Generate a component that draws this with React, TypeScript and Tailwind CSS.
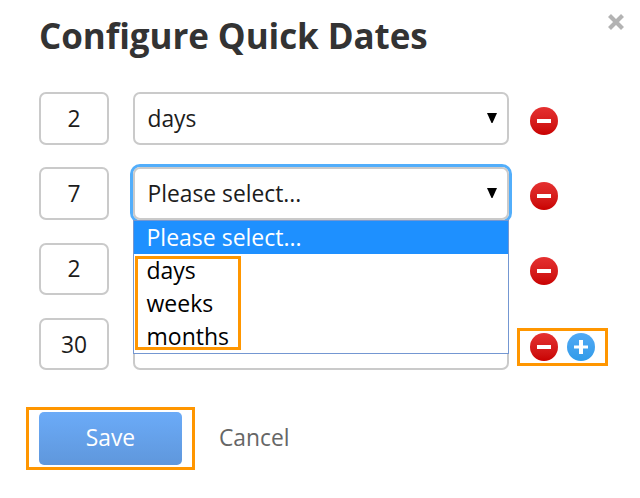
import React from "react";

const font = { label: "font-['Open_Sans','Noto_Sans',sans-serif]" };

function RemoveIcon() {
  return (
    <button aria-label="Remove" className="flex h-7 w-7 shrink-0 items-center justify-center rounded-full bg-linear-to-b from-[#e53030] to-[#c90000]">
      <span className="h-1 w-3.5 bg-white" />
    </button>
  );
}

function AddIcon() {
  return (
    <button aria-label="Add" className="ml-[9px] flex h-7 w-7 shrink-0 items-center justify-center rounded-full bg-linear-to-b from-[#52aaf5] to-[#2f9be9]">
      <svg width="14" height="14" viewBox="0 0 14 14" fill="#fff">
        <path d="M5 0h4v5.500h5v3H9V14H5V8.500H0v-3h5z" />
      </svg>
    </button>
  );
}

function Caret() {
  return (
    <svg width="10" height="10" viewBox="0 0 10 10" className="-mt-0.5 shrink-0">
      <path d="M0 0h10L5.500 10h-1z" />
    </svg>
  );
}

function Menu() {
  return (
    <div className="absolute -left-0.5 top-[51px] z-10 h-[134px] w-[376px] border border-[#7497d2] bg-white text-[23px] leading-[33px] text-black">
      <div className="h-[33px] bg-[#1e90ff] pl-[12.5px] text-white">Please select...</div>
      <div className="h-[33px] pl-[12.5px]">days</div>
      <div className="h-[33px] pl-[12.5px]">weeks</div>
      <div className="h-[33px] pl-[12.5px]">months</div>
      <div className="absolute left-px top-[35px] h-[94px] w-[106px] border-3 border-[#ff9600]" />
    </div>
  );
}

type RowProps = { count: string; value?: string; open?: boolean; last?: boolean; height: string; iconOffset?: string };

function Row({ count, value, open, last, height, iconOffset = "mt-[15px]" }: RowProps) {
  return (
    <div className={`flex ${height}`}>
      <div className={`flex w-[70px] items-center justify-center rounded-[7px] border-2 border-[#cacaca] text-[22.8px] text-[#1c1c1c] ${last ? "pt-[3px]" : "pt-px"}`}>
        {count}
      </div>
      <div
        className={`relative ml-6 flex w-[376px] items-center justify-between rounded-[7px] border-2 border-[#cacaca] pr-2.5 pl-[12.5px] text-[22.8px] text-[#1c1c1c] ${open ? "shadow-[0_0_0_3px_#52aefb]" : ""}`}
      >
        <span className="mt-px">{value}</span>
        {value && <Caret />}
        {open && <Menu />}
      </div>
      <div className={`relative ml-[21px] flex h-[28px] ${iconOffset}`}>
        <RemoveIcon />
        {last && <AddIcon />}
        {last && <div className="absolute -left-[13px] -top-[5px] h-[38px] w-[91px] border-3 border-[#ff9600]" />}
      </div>
    </div>
  );
}

export default function App() {
  return (
    <main className={`relative h-[498px] w-[640px] overflow-hidden bg-white pl-[39px] ${font.label}`}>
      <header className="flex h-[92px] justify-between pr-4">
        <h1 className="mt-3 whitespace-nowrap text-[35px] leading-[48px] font-bold tracking-[-0.08px] text-[#333]">Configure Quick Dates</h1>
        <svg width="16" height="16" viewBox="0 0 16 16" className="mt-3.5" aria-label="Close">
          <path d="M1.500 1.500 14.500 14.500M14.500 1.500 1.500 14.500" stroke="#b3b3b3" strokeWidth="4.200" />
        </svg>
      </header>
      <section className="flex flex-col">
        <Row count="2" value="days" height="h-[53px] mb-[22px]" />
        <Row count="7" value="Please select..." open height="h-[53px] mb-[23px]" />
        <Row count="2" height="h-[52px] mb-[23px]" iconOffset="mt-3.5" />
        <Row count="30" last height="h-[52px]" />
      </section>
      <footer className="mt-[42px] flex h-[53px] items-center">
        <div className="relative">
          <button className="block h-[53px] w-[143px] rounded-[5px] bg-linear-to-b from-[#6babf8] to-[#5f97dc] pb-px text-[22.800px] text-white">Save</button>
          <div className="absolute -left-[13px] -top-[5px] h-[63px] w-[169px] border-3 border-[#ff9600]" />
        </div>
        <button className="ml-[37px] pb-px text-[22.800px] text-[#666]">Cancel</button>
      </footer>
    </main>
  );
}
